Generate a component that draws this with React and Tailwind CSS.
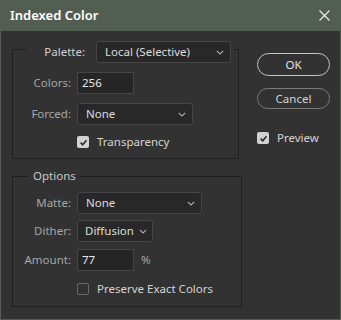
import React from "react";

const font = { fontFamily: '"Noto Sans", "Open Sans", sans-serif' };

const Chevron = () => (
    <svg className="h-[5px] w-[8px] text-[#b0b0b0]" viewBox="0 0 8 5" fill="none">
        <path d="M0.8 0.8l3.2 3.2 3.2-3.2" stroke="currentColor" strokeWidth="1.1" />
    </svg>
);

const Select = ({ value, width, pad = "pl-[8px] pr-[6px]" }) => (
    <div
        className={`flex h-[22px] shrink-0 items-center justify-between rounded-[3px] border border-[#454545] bg-[#282828] text-[11.5px] text-[#dcdcdc] ${pad} ${width}`}
    >
        <span>{value}</span>
        <Chevron />
    </div>
);

const Input = ({ value }) => (
    <div className="flex h-[22px] w-[57px] items-center border border-[#454545] bg-[#262626] pl-[4px] text-[11.5px] text-[#e6e6e6]">
        {value}
    </div>
);

const Check = ({ checked, label }) => (
    <div className="flex h-[16px] items-center gap-[8px]">
        {checked ? (
            <div className="flex h-[12px] w-[12px] items-center justify-center rounded-[2px] bg-[#d2d2d2]">
                <svg className="h-[9px] w-[9px]" viewBox="0 0 10 10" fill="none">
                    <path d="M1.8 5.2l2.3 2.3L8.3 2.6" stroke="#2a2a2a" strokeWidth="1.8" />
                </svg>
            </div>
        ) : (
            <div className="h-[12px] w-[12px] rounded-[2px] border border-[#6a6a6a]" />
        )}
        <span className="text-[11.5px] text-[#d4d4d4]">{label}</span>
    </div>
);

const Row = ({ label, children, className = "" }) => (
    <div className={`flex items-center ${className}`}>
        <span className="w-[64px] pr-[6px] text-right text-[11.5px] text-[#a6a6a6]">{label}</span>
        {children}
    </div>
);

export default function App() {
    return (
        <div
            className="flex h-[320px] w-[341px] flex-col border-x border-b border-[#535e53] bg-[#323232]"
            style={font}
        >
            {/* Title bar */}
            <div className="flex h-[31px] shrink-0 items-center justify-between bg-[#535e53] pl-[9px] pr-[10px]">
                <span className="text-[13px] font-semibold text-white">Indexed Color</span>
                <svg className="h-[11px] w-[11px]" viewBox="0 0 11 11" fill="none">
                    <path d="M0.5 0.5l10 10M10.5 0.5l-10 10" stroke="#e8e8e8" strokeWidth="1.3" />
                </svg>
            </div>

            <div className="flex">
                {/* Left column */}
                <div className="ml-[11px] flex flex-col">
                    {/* Palette group */}
                    <div className="mt-[18px] h-[110px] w-[227px] border border-[#1f1f1f]">
                        <div className="-mt-[9px] ml-[13px] flex w-fit items-center bg-[#323232] pr-[3px]">
                            <span className="w-[70px] pr-[11px] text-right text-[11.5px] text-[#d0d0d0]">Palette:</span>
                            <Select value="Local (Selective)" width="w-[135px]" />
                        </div>
                        <Row label="Colors:" className="mt-[9px]">
                            <Input value="256" />
                        </Row>
                        <Row label="Forced:" className="mt-[9px]">
                            <Select value="None" width="w-[116px]" />
                        </Row>
                        <div className="ml-[64px] mt-[9px]">
                            <Check checked label="Transparency" />
                        </div>
                    </div>

                    {/* Options group */}
                    <div className="mt-[17px] h-[131px] w-[230px] border border-[#1f1f1f]">
                        <div className="-mt-[9px] ml-[16px] flex h-[16px] w-fit items-center bg-[#323232] px-[4px] text-[11.5px] text-[#c8c8c8]">
                            Options
                        </div>
                        <Row label="Matte:" className="mt-[8px]">
                            <Select value="None" width="w-[125px]" />
                        </Row>
                        <Row label="Dither:" className="mt-[6px]">
                            <Select value="Diffusion" width="w-[76px]" pad="pl-[7px] pr-[5px]" />
                        </Row>
                        <Row label="Amount:" className="mt-[7px]">
                            <Input value="77" />
                            <span className="ml-[7px] text-[11.5px] text-[#a6a6a6]">%</span>
                        </Row>
                        <div className="ml-[64px] mt-[10px]">
                            <Check label="Preserve Exact Colors" />
                        </div>
                    </div>
                </div>

                {/* Right column */}
                <div className="ml-[15px] mt-[22px] flex flex-col">
                    <button className="flex h-[23px] w-[73px] items-center justify-center rounded-full border-[1.5px] border-[#c4c4c4] text-[11.5px] text-[#e0e0e0]">
                        OK
                    </button>
                    <button className="mt-[12px] flex h-[21px] w-[73px] items-center justify-center rounded-full border border-[#7a7a7a] text-[11.5px] text-[#d4d4d4]">
                        Cancel
                    </button>
                    <div className="mt-[21px]">
                        <Check checked label="Preview" />
                    </div>
                </div>
            </div>
        </div>
    );
}
